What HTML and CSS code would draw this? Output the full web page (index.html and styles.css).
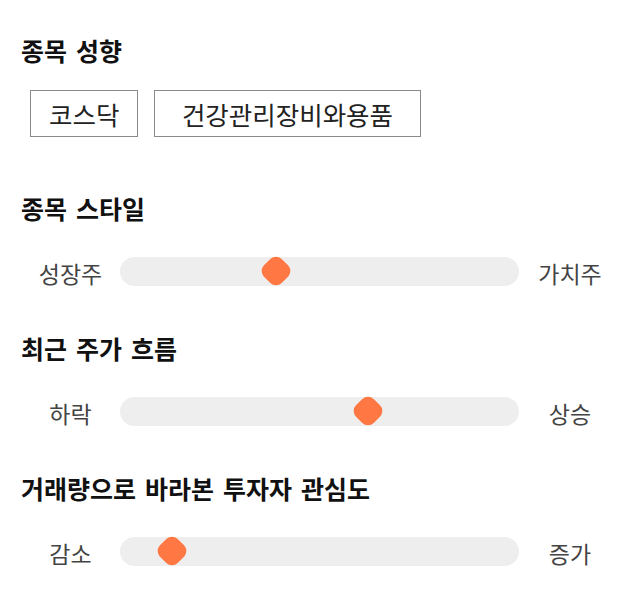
FILE: index.html
```html
<!DOCTYPE html>
<html lang="ko">
<head>
<meta charset="utf-8">
<link rel="stylesheet" href="styles.css">
</head>
<body>
<div class="page">
  <section class="section section--tags">
    <h2 class="heading">종목 성향</h2>
    <div class="tags">
      <span class="tag">코스닥</span>
      <span class="tag tag--wide">건강관리장비와용품</span>
    </div>
  </section>
  <section class="section">
    <h2 class="heading">종목 스타일</h2>
    <div class="slider">
      <span class="label">성장주</span>
      <div class="track"><span class="thumb" style="left: 39.2%"></span></div>
      <span class="label">가치주</span>
    </div>
  </section>
  <section class="section">
    <h2 class="heading">최근 주가 흐름</h2>
    <div class="slider">
      <span class="label">하락</span>
      <div class="track"><span class="thumb" style="left: 62.1%"></span></div>
      <span class="label">상승</span>
    </div>
  </section>
  <section class="section">
    <h2 class="heading">거래량으로 바라본 투자자 관심도</h2>
    <div class="slider">
      <span class="label">감소</span>
      <div class="track"><span class="thumb" style="left: 13%"></span></div>
      <span class="label">증가</span>
    </div>
  </section>
</div>
</body>
</html>
```
FILE: styles.css
```css
* { box-sizing: border-box; }
html, body { margin: 0; padding: 0; background: #fff; }
body {
  font-family: "Noto Sans CJK KR", "Noto Sans", sans-serif;
  color: #222;
}
.page {
  padding: 35px 19px 0 21px;
  display: flex;
  flex-direction: column;
  gap: 47px;
}
.section {
  display: flex;
  flex-direction: column;
  gap: 33px;
}
.section--tags {
  gap: 25px;
  margin-bottom: 9px;
}
.heading {
  margin: 0;
  font-size: 25px;
  line-height: 30px;
  font-weight: 700;
  color: #111;
  word-spacing: 2px;
}
.tags {
  display: flex;
  gap: 16px;
  padding-left: 9px;
}
.tag {
  display: flex;
  align-items: center;
  height: 47px;
  padding: 0 18px;
  border: 1px solid #8a8a8a;
  font-size: 25.5px;
  color: #222;
}
.tag--wide { padding: 0 26.5px; }
.slider {
  display: flex;
  align-items: center;
  height: 30px;
}
.label {
  flex: 0 0 99px;
  text-align: center;
  font-size: 23px;
  line-height: 30px;
  color: #444;
  padding-top: 4px;
}
.slider .label:last-child { flex-basis: 102px; }
.track {
  position: relative;
  flex: 1;
  height: 29px;
  border-radius: 15px;
  background: #eeeeee;
}
.thumb {
  position: absolute;
  top: 50%;
  width: 25px;
  height: 25px;
  background: #ff7843;
  border-radius: 8px;
  transform: translate(-50%, -50%) rotate(45deg);
}
```
